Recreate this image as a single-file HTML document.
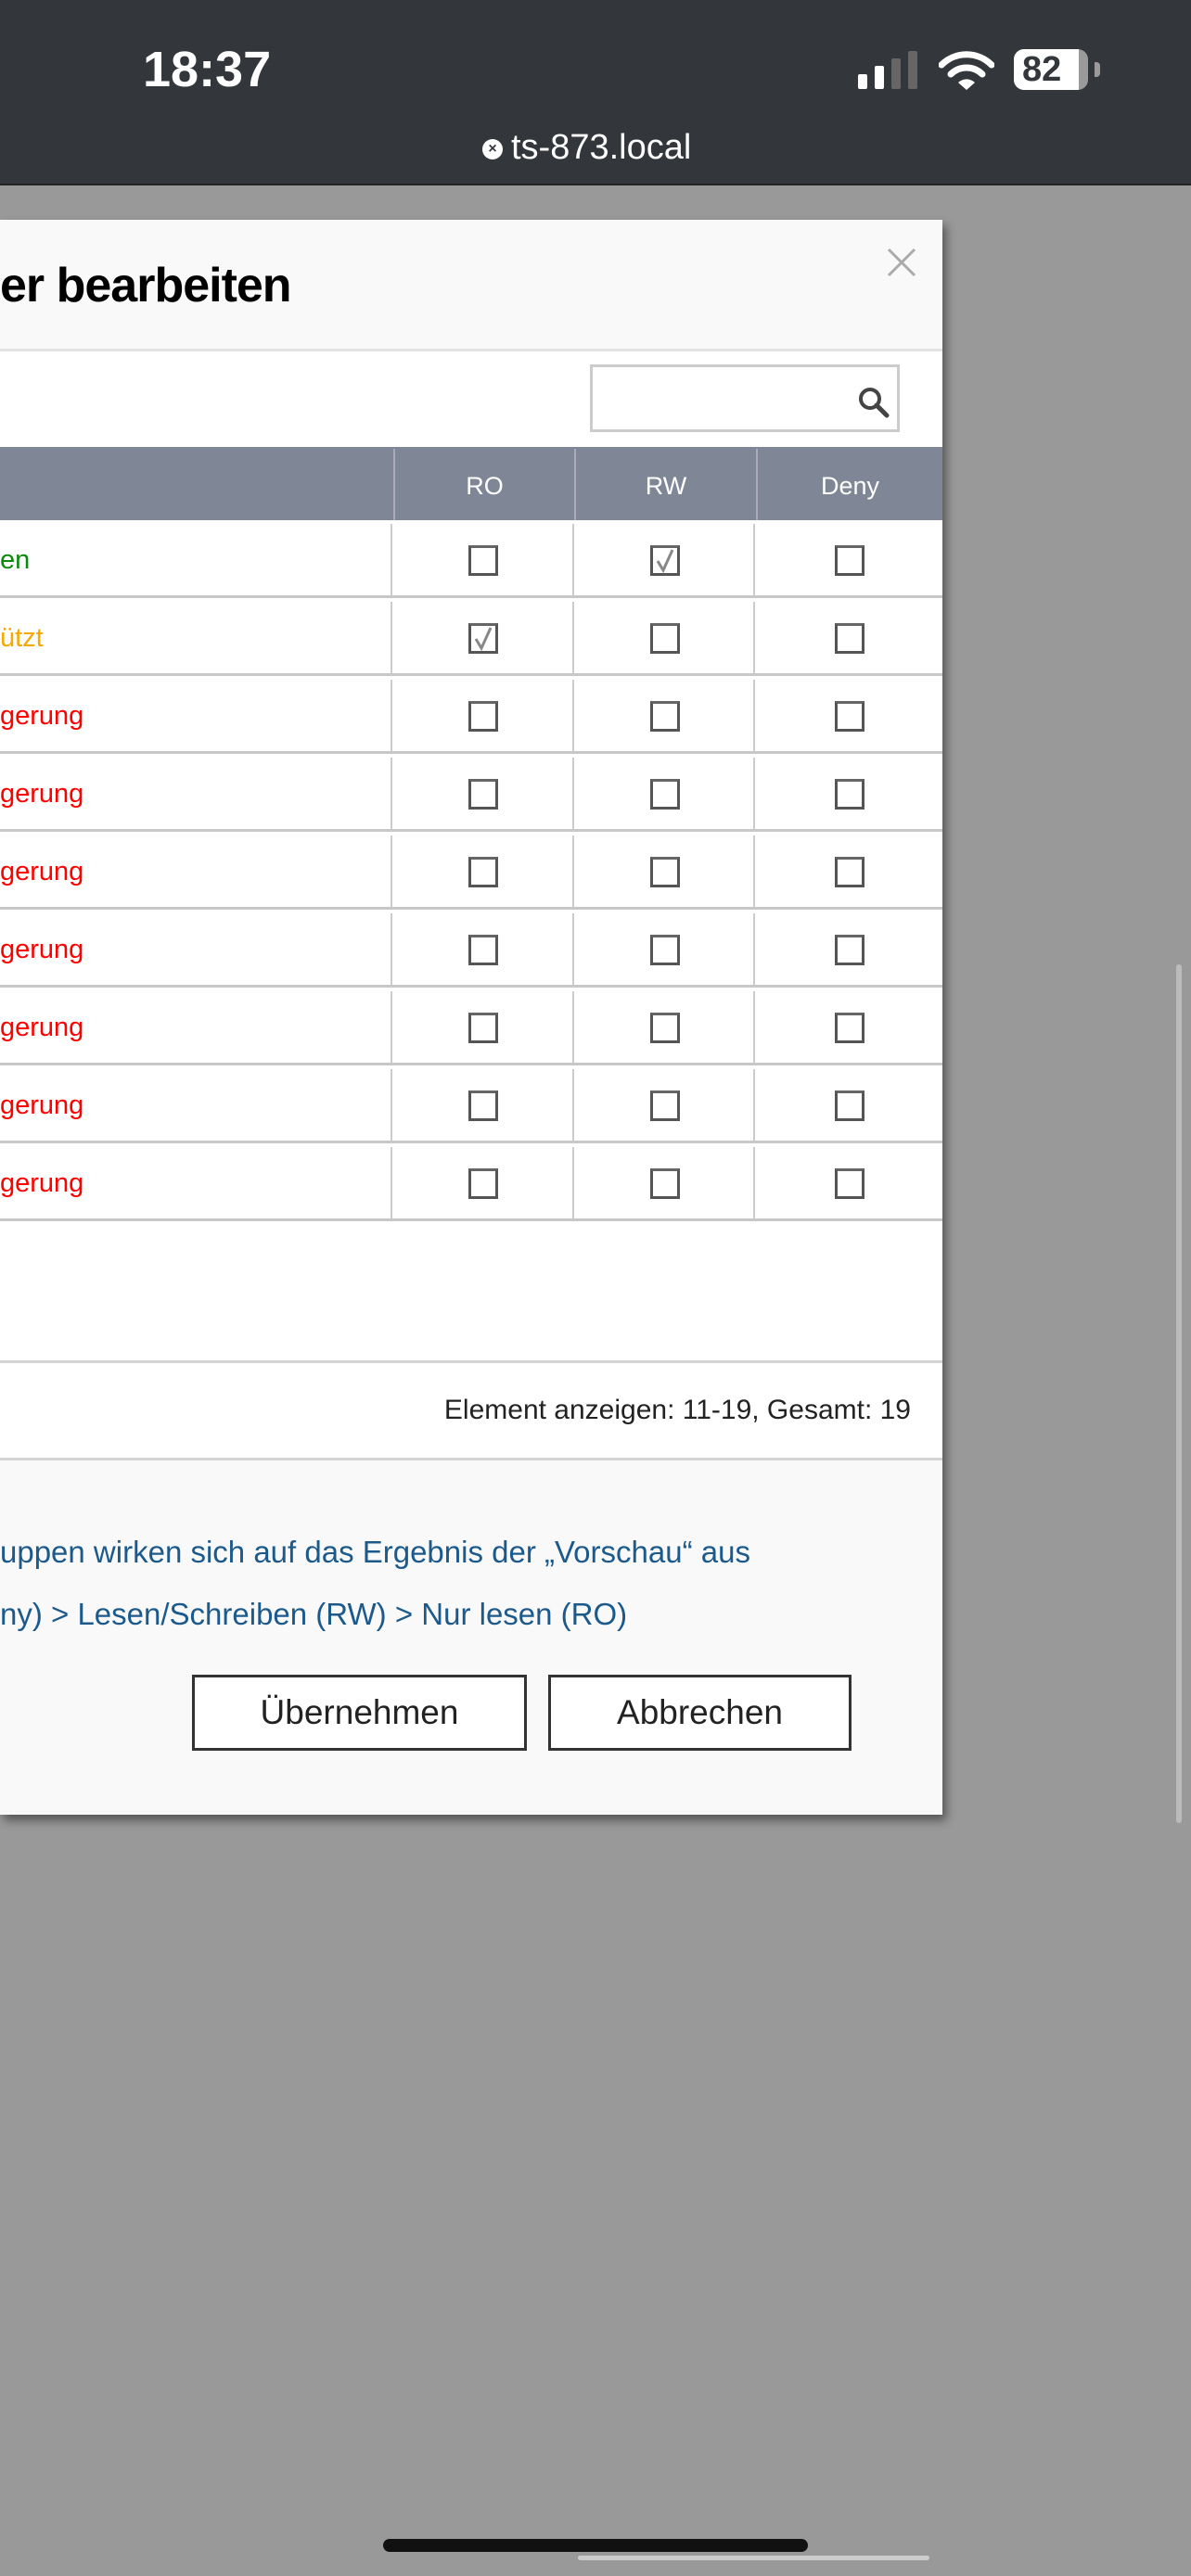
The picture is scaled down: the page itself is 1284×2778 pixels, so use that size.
<!DOCTYPE html>
<html><head><meta charset="utf-8"><style>
*{margin:0;padding:0;box-sizing:border-box}
body{width:1284px;height:2778px;background:#999;position:relative;overflow:hidden;font-family:"Liberation Sans",sans-serif}
.abs{position:absolute}
.top{left:0;top:0;width:1284px;height:200px;background:#33363a;border-bottom:2px solid #222}
.modal{left:0;top:237px;width:1016px;height:1720px;background:#fff;box-shadow:4px 6px 10px rgba(0,0,0,.45)}
.hdr{left:0;top:0;width:1016px;height:142px;background:#f9f9f9;border-bottom:3px solid #e2e2e2}
.th{left:0;top:245px;width:1016px;height:79px;background:#7f8797;color:#fff;font-size:27px}
.vs{width:2px;background:#ccc}
.cb{width:32px;height:33px;border:3px solid #555;border-top-color:#666;background:#fff}
.btn{border:3px solid #333;background:#fff;font-size:37px;color:#222;text-align:center;line-height:76px}
.r{position:absolute;left:0;width:1016px;height:84px;border-bottom:3px solid #c8c8c8;background:#fff}
.r .vs{position:absolute;top:4px;height:77px}
.r .cb{position:absolute;top:27px}
.r .t{position:absolute;left:0;top:27px;font-size:29px}
</style></head><body>
<div class="abs top">
  <div class="abs" style="left:154px;top:44px;font-size:54px;color:#fff;font-weight:bold">18:37</div>
  <div class="abs" style="left:925px;top:80px;width:10px;height:16px;background:#fff;border-radius:2px"></div>
  <div class="abs" style="left:943px;top:71px;width:10px;height:25px;background:#fff;border-radius:2px"></div>
  <div class="abs" style="left:961px;top:63px;width:10px;height:33px;background:#666;border-radius:2px"></div>
  <div class="abs" style="left:979px;top:55px;width:10px;height:41px;background:#666;border-radius:2px"></div>
  <svg class="abs" style="left:1012px;top:54px" width="60" height="44" viewBox="0 0 60 44"><path d="M3 16 A38 38 0 0 1 57 16" stroke="#fff" stroke-width="7" fill="none" stroke-linecap="round"/><path d="M13 26 A24 24 0 0 1 47 26" stroke="#fff" stroke-width="7" fill="none" stroke-linecap="round"/><path d="M21 35 L30 43 L39 35 A13 13 0 0 0 21 35Z" fill="#fff"/></svg>
  <div class="abs" style="left:1093px;top:53px;width:80px;height:44px;border-radius:11px;background:#9a9a9a;overflow:hidden"><div style="width:70px;height:44px;background:#fff"></div></div>
  <div class="abs" style="left:1102px;top:54px;font-size:38px;font-weight:bold;color:#33363a">82</div>
  <div class="abs" style="left:1180px;top:67px;width:6px;height:16px;background:#9a9a9a;border-radius:0 4px 4px 0"></div>
  <div class="abs" style="left:520px;top:150px;width:22px;height:22px;border-radius:11px;background:#fff;color:#33363a;font-size:16px;font-weight:bold;text-align:center;line-height:22px">×</div>
  <div class="abs" style="left:551px;top:138px;font-size:38px;color:#fff">ts-873.local</div>
</div>
<div class="abs modal">
  <div class="abs hdr">
    <div class="abs" style="left:0;top:41px;font-size:52px;font-weight:bold;color:#000;letter-spacing:-1px">er bearbeiten</div>
    <svg class="abs" style="left:956px;top:30px" width="32" height="32"><path d="M2 2L30 30M30 2L2 30" stroke="#aaa" stroke-width="3"/></svg>
  </div>
  <div class="abs" style="left:636px;top:156px;width:334px;height:73px;border:3px solid #ccc;background:#fff">
    <svg class="abs" style="left:285px;top:20px" width="36" height="36"><circle cx="14" cy="14" r="10" stroke="#444" stroke-width="4" fill="none"/><path d="M21 21L32 32" stroke="#444" stroke-width="5" stroke-linecap="round"/></svg>
  </div>
  <div class="abs th">
    <div class="abs vs" style="left:424px;top:2px;height:77px;background:#aab"></div>
    <div class="abs vs" style="left:619px;top:2px;height:77px;background:#aab"></div>
    <div class="abs vs" style="left:815px;top:2px;height:77px;background:#aab"></div>
    <div class="abs" style="left:426px;width:193px;top:27px;text-align:center">RO</div>
    <div class="abs" style="left:621px;width:194px;top:27px;text-align:center">RW</div>
    <div class="abs" style="left:817px;width:199px;top:27px;text-align:center">Deny</div>
  </div>
</div>
<div class="abs" style="left:1268px;top:1040px;width:6px;height:926px;background:#bbb;border-radius:3px"></div>
<div class="abs" style="left:413px;top:2738px;width:458px;height:14px;background:#111;border-radius:7px"></div>
<div class="abs" style="left:623px;top:2756px;width:379px;height:5px;background:#ccc;border-radius:3px"></div>
<div class="abs" style="left:0;top:561px;width:1016px;height:1396px">
  <div class="r" style="top:0"><div class="t" style="color:#0a8a0a">en</div><div class="vs" style="left:421px"></div><div class="vs" style="left:617px"></div><div class="vs" style="left:812px"></div><div class="cb" style="left:505px"></div><div class="cb" style="left:701px"><svg width="26" height="27" style="position:absolute;left:0;top:0"><path d="M5 14L11 24L21 2" stroke="#888" stroke-width="3" fill="none"/></svg></div><div class="cb" style="left:900px"></div></div>
  <div class="r" style="top:84px"><div class="t" style="color:#f5a800">ützt</div><div class="vs" style="left:421px"></div><div class="vs" style="left:617px"></div><div class="vs" style="left:812px"></div><div class="cb" style="left:505px"><svg width="26" height="27" style="position:absolute;left:0;top:0"><path d="M5 14L11 24L21 2" stroke="#888" stroke-width="3" fill="none"/></svg></div><div class="cb" style="left:701px"></div><div class="cb" style="left:900px"></div></div>
  <div class="r" style="top:168px"><div class="t" style="color:#f00">gerung</div><div class="vs" style="left:421px"></div><div class="vs" style="left:617px"></div><div class="vs" style="left:812px"></div><div class="cb" style="left:505px"></div><div class="cb" style="left:701px"></div><div class="cb" style="left:900px"></div></div>
  <div class="r" style="top:252px"><div class="t" style="color:#f00">gerung</div><div class="vs" style="left:421px"></div><div class="vs" style="left:617px"></div><div class="vs" style="left:812px"></div><div class="cb" style="left:505px"></div><div class="cb" style="left:701px"></div><div class="cb" style="left:900px"></div></div>
  <div class="r" style="top:336px"><div class="t" style="color:#f00">gerung</div><div class="vs" style="left:421px"></div><div class="vs" style="left:617px"></div><div class="vs" style="left:812px"></div><div class="cb" style="left:505px"></div><div class="cb" style="left:701px"></div><div class="cb" style="left:900px"></div></div>
  <div class="r" style="top:420px"><div class="t" style="color:#f00">gerung</div><div class="vs" style="left:421px"></div><div class="vs" style="left:617px"></div><div class="vs" style="left:812px"></div><div class="cb" style="left:505px"></div><div class="cb" style="left:701px"></div><div class="cb" style="left:900px"></div></div>
  <div class="r" style="top:504px"><div class="t" style="color:#f00">gerung</div><div class="vs" style="left:421px"></div><div class="vs" style="left:617px"></div><div class="vs" style="left:812px"></div><div class="cb" style="left:505px"></div><div class="cb" style="left:701px"></div><div class="cb" style="left:900px"></div></div>
  <div class="r" style="top:588px"><div class="t" style="color:#f00">gerung</div><div class="vs" style="left:421px"></div><div class="vs" style="left:617px"></div><div class="vs" style="left:812px"></div><div class="cb" style="left:505px"></div><div class="cb" style="left:701px"></div><div class="cb" style="left:900px"></div></div>
  <div class="r" style="top:672px"><div class="t" style="color:#f00">gerung</div><div class="vs" style="left:421px"></div><div class="vs" style="left:617px"></div><div class="vs" style="left:812px"></div><div class="cb" style="left:505px"></div><div class="cb" style="left:701px"></div><div class="cb" style="left:900px"></div></div>
  <div class="abs" style="left:0;top:906px;width:1016px;height:3px;background:#d4d4d4"></div>
  <div class="abs" style="right:34px;top:943px;font-size:30px;color:#222">Element anzeigen: 11-19, Gesamt: 19</div>
  <div class="abs" style="left:0;top:1011px;width:1016px;height:385px;background:#f9f9f9;border-top:3px solid #d4d4d4"></div>
  <div class="abs" style="left:0;top:1094px;font-size:33px;color:#1d5a8c;white-space:nowrap">uppen wirken sich auf das Ergebnis der „Vorschau“ aus</div>
  <div class="abs" style="left:0;top:1161px;font-size:33px;color:#1d5a8c;white-space:nowrap">ny) &gt; Lesen/Schreiben (RW) &gt; Nur lesen (RO)</div>
  <div class="abs btn" style="left:207px;top:1245px;width:361px;height:82px">Übernehmen</div>
  <div class="abs btn" style="left:591px;top:1245px;width:327px;height:82px">Abbrechen</div>
</div>
</body></html>
